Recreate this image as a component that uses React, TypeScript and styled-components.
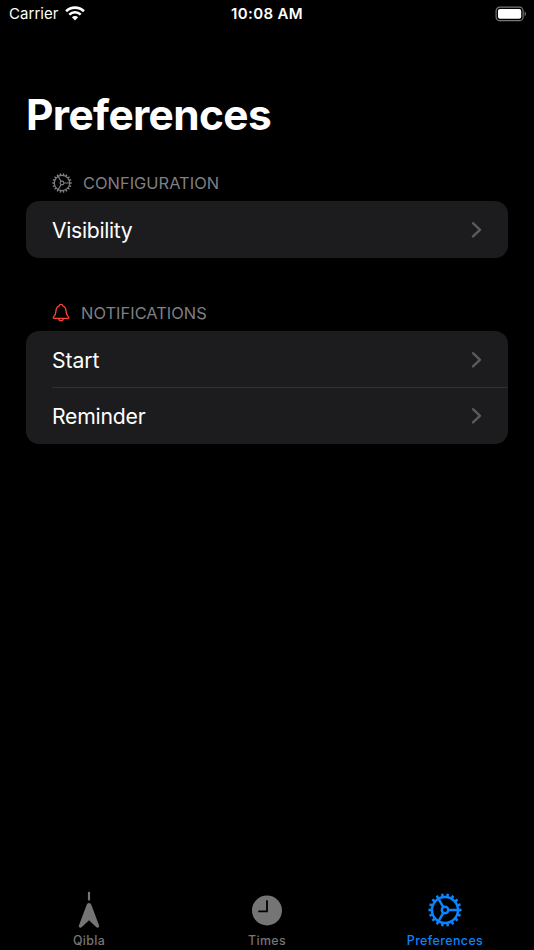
import React from 'react';
import styled, { createGlobalStyle } from 'styled-components';

const GlobalStyle = createGlobalStyle`
  * { box-sizing: border-box; }
  html, body, #root { height: 100%; margin: 0; background: #000; }
  body { font-family: Inter, "Liberation Sans", sans-serif; -webkit-font-smoothing: antialiased; }
`;

const Screen = styled.div`
  width: 534px;
  height: 950px;
  display: flex;
  flex-direction: column;
  overflow: hidden;
  background: #000;
  color: #fff;
`;

const StatusBar = styled.header`
  height: 28px;
  flex: none;
  display: grid;
  grid-template-columns: 1fr auto 1fr;
  align-items: center;
  padding: 0 7px 0 9px;
  font-size: 15px;
  line-height: 20px;
`;

const Carrier = styled.div`
  display: flex;
  align-items: center;
  gap: 6px;
  letter-spacing: 0.05px;
  svg { margin-top: -2px; }
`;

const Clock = styled.time`
  margin-right: 2px;
  font-weight: 600;
  letter-spacing: 0.36px;
`;

const BatteryIcon = styled.svg`
  justify-self: end;
  margin-top: -1px;
`;

const Content = styled.main`
  flex: 1;
  padding: 60px 26px 0;
`;

const Title = styled.h1`
  margin: 0;
  height: 52px;
  font-size: 42.4px;
  font-weight: 700;
  line-height: 53px;
  letter-spacing: -0.63px;
`;

const Section = styled.section<{ $top: number }>`
  padding-top: ${(p) => p.$top}px;
`;

const SectionTitle = styled.h2<{ $gap: number }>`
  display: flex;
  align-items: center;
  gap: ${(p) => p.$gap}px;
  height: 24px;
  margin: 0 0 6px;
  padding-left: 26px;
  color: #7f7f84;
  font-size: 16.4px;
  font-weight: 400;
  line-height: 24px;
`;

const SectionLabel = styled.span<{ $spacing: number }>`
  letter-spacing: ${(p) => p.$spacing}px;
`;

const Card = styled.div`
  overflow: hidden;
  border-radius: 13px;
  background: #1c1c1e;
`;

const Row = styled.div`
  height: 56.5px;
  padding-left: 26px;
  & + & > div { box-shadow: 0 -1px #323235; }
`;

const RowInner = styled.div`
  height: 100%;
  display: flex;
  align-items: center;
  justify-content: space-between;
  padding-right: 26px;
`;

const RowLabel = styled.span<{ $spacing: number }>`
  padding-top: 1px;
  font-size: 21.2px;
  line-height: 28px;
  letter-spacing: ${(p) => p.$spacing}px;
`;

const TabBar = styled.nav`
  flex: none;
  height: 64px;
  display: grid;
  grid-template-columns: repeat(3, 178px);
`;

const Tab = styled.div<{ $active?: boolean }>`
  display: flex;
  flex-direction: column;
  align-items: center;
  color: ${(p) => (p.$active ? '#0a84ff' : '#757575')};
`;

const TabGlyph = styled.div`
  height: 46px;
  padding-top: 5px;
  display: flex;
  align-items: center;
  padding-bottom: 3px;
  svg { display: block; }
`;

const TabLabel = styled.span<{ $spacing: number }>`
  font-size: 12.4px;
  font-weight: 500;
  line-height: 17px;
  letter-spacing: ${(p) => p.$spacing}px;
`;

function polar(r: number, degrees: number) {
  const a = (degrees * Math.PI) / 180;
  return `${(20 + r * Math.cos(a)).toFixed(2)} ${(20 + r * Math.sin(a)).toFixed(2)}`;
}

const TEETH = Array.from({ length: 18 }, (_, i) => i * 20)
  .map((a) => `M${polar(15.5, a - 6)}L${polar(19.5, a - 4)}L${polar(19.5, a + 4)}L${polar(15.5, a + 6)}Z`)
  .join('');
const SPOKES = [0, 120, 240].map((a) => `M${polar(4, a)}L${polar(15.5, a)}`).join('');

function Gear({ size, weight }: { size: number; weight: number }) {
  return (
    <svg width={size} height={size} viewBox="0 0 40 40" fill="none" stroke="currentColor" strokeWidth={weight}>
      <circle cx="20" cy="20" r="15.3" />
      <circle cx="20" cy="20" r="3.8" />
      <path d={SPOKES} />
      <path d={TEETH} fill="currentColor" stroke="none" />
    </svg>
  );
}

function Bell() {
  return (
    <svg width="18" height="20" viewBox="0 0 18 20" fill="none" stroke="#ff4238" strokeWidth="1.3" strokeLinejoin="round">
      <path d="M2.2 15.3C.9 15.3 1 14.3 1.9 13.4c1.2-1.2 1.8-2 1.9-4.3.1-3.3.8-5.3 3.2-6C7.2 1.8 8 1.4 9 1.4s1.8.4 2 1.7c2.4.7 3.1 2.7 3.2 6 .1 2.3.7 3.1 1.9 4.3.9.9 1 1.9-.3 1.9Z" />
      <path d="M6.6 15.5c.2 1.5 1.1 2.3 2.4 2.3s2.2-.8 2.4-2.3" />
    </svg>
  );
}

function Chevron() {
  return (
    <svg width="11" height="17" viewBox="0 0 11 17" fill="none" stroke="#5a5a5e" strokeWidth="2.4" strokeLinecap="round" strokeLinejoin="round">
      <path d="m2 2.2 7 6.6-7 6.6" />
    </svg>
  );
}

function Wifi() {
  return (
    <svg width="20" height="15" viewBox="0 0 20 15" fill="none" stroke="#fff" strokeWidth="2.6">
      <path d="M1.1 5.2a12.8 12.8 0 0 1 17.8 0" />
      <path d="M4.3 8.6a8.2 8.2 0 0 1 11.4 0" />
      <path d="M10 14.4 6.9 11.3a4.4 4.4 0 0 1 6.2 0Z" fill="#fff" stroke="none" />
    </svg>
  );
}

function Battery() {
  return (
    <BatteryIcon width="32" height="16" viewBox="0 0 32 16">
      <rect x="1.1" y="1.1" width="27" height="13.6" rx="3.8" fill="none" stroke="#777" strokeWidth="1.2" />
      <rect x="3" y="3" width="23.2" height="9.8" rx="2" fill="#fff" />
      <path d="M29.6 5.6c1.8.6 1.8 4 0 4.6Z" fill="#777" />
    </BatteryIcon>
  );
}

function Compass() {
  return (
    <svg width="24" height="38" viewBox="0 0 24 38" fill="currentColor">
      <rect x="10.9" y="0.8" width="2.2" height="8.8" rx="1" />
      <path d="M12 12c-1.1 0-1.9.7-2.3 1.8L2 34.3c-.7 2 1.4 3.3 2.9 1.8L12 29.3l7.1 6.8c1.5 1.5 3.6.2 2.9-1.8l-7.7-20.5C13.9 12.7 13.1 12 12 12Z" />
    </svg>
  );
}

function ClockFace() {
  return (
    <svg width="32" height="38" viewBox="0 0 32 38">
      <circle cx="16" cy="19.5" r="15" fill="currentColor" />
      <path d="M16 10v10.4H8" fill="none" stroke="#000" strokeWidth="1.8" strokeLinecap="round" strokeLinejoin="round" />
    </svg>
  );
}

function NavRow({ label, spacing }: { label: string; spacing: number }) {
  return (
    <Row>
      <RowInner>
        <RowLabel $spacing={spacing}>{label}</RowLabel>
        <Chevron />
      </RowInner>
    </Row>
  );
}

export default function App() {
  return (
    <>
      <GlobalStyle />
      <Screen>
        <StatusBar>
          <Carrier>Carrier<Wifi /></Carrier>
          <Clock>10:08 AM</Clock>
          <Battery />
        </StatusBar>
        <Content>
          <Title>Preferences</Title>
          <Section $top={31}>
            <SectionTitle $gap={11}>
              <Gear size={20} weight={2.3} />
              <SectionLabel $spacing={0.03}>CONFIGURATION</SectionLabel>
            </SectionTitle>
            <Card>
              <NavRow label="Visibility" spacing={-0.33} />
            </Card>
          </Section>
          <Section $top={43.5}>
            <SectionTitle $gap={11}>
              <Bell />
              <SectionLabel $spacing={0.03}>NOTIFICATIONS</SectionLabel>
            </SectionTitle>
            <Card>
              <NavRow label="Start" spacing={-0.1} />
              <NavRow label="Reminder" spacing={-0.22} />
            </Card>
          </Section>
        </Content>
        <TabBar>
          <Tab>
            <TabGlyph><Compass /></TabGlyph>
            <TabLabel $spacing={0.35}>Qibla</TabLabel>
          </Tab>
          <Tab>
            <TabGlyph><ClockFace /></TabGlyph>
            <TabLabel $spacing={0.4}>Times</TabLabel>
          </Tab>
          <Tab $active>
            <TabGlyph><Gear size={34} weight={2.9} /></TabGlyph>
            <TabLabel $spacing={0.42}>Preferences</TabLabel>
          </Tab>
        </TabBar>
      </Screen>
    </>
  );
}
